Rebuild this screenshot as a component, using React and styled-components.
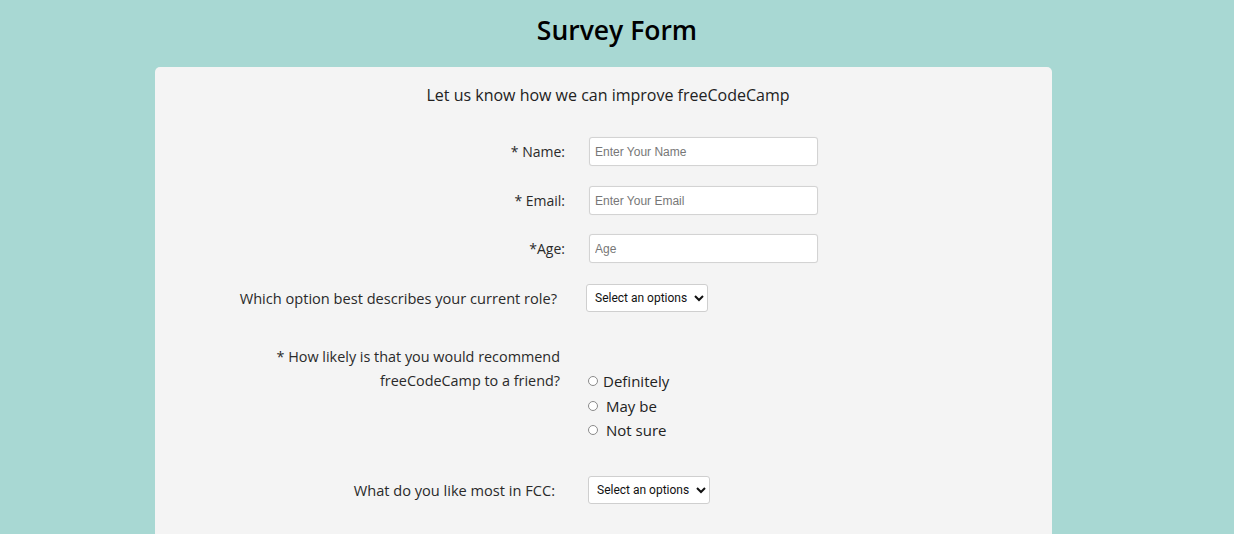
import React from "react";
import styled, { createGlobalStyle } from "styled-components";

const Global = createGlobalStyle`
  html, body { margin: 0; padding: 0; }
  body {
    background: #a8d8d3;
    font-family: "Open Sans", "Noto Sans", sans-serif;
    color: #222;
    overflow: hidden;
  }
`;

const Page = styled.div`
  padding: 0 182px 0 155px;
  height: 534px;
  box-sizing: border-box;
`;

const Title = styled.h1`
  margin: 0;
  height: 67px;
  display: flex;
  align-items: center;
  justify-content: center;
  padding-left: 27px;
  font-size: 26.5px;
  font-weight: 600;
  color: #000;
  padding-bottom: 7px;
  box-sizing: border-box;
`;

const Card = styled.form`
  background: #f4f4f4;
  border-radius: 5px 5px 0 0;
  padding-top: 18px;
  height: 467px;
  box-sizing: border-box;
`;

const Subtitle = styled.p`
  margin: 0 0 31px;
  text-align: center;
  font-size: 16px;
  line-height: 21px;
  padding-left: 9px;
  color: #222;
`;

const Row = styled.div`
  display: grid;
  grid-template-columns: ${(p) => p.$label}px auto;
  column-gap: ${(p) => p.$gap}px;
  align-items: ${(p) => p.$align || "center"};
  margin-top: ${(p) => p.$mt || 0}px;
`;

const Label = styled.label`
  text-align: right;
  font-size: ${(p) => p.$size || 14.6}px;
  line-height: 24px;
  color: #2a2a2a;
`;

const Input = styled.input`
  width: 229px;
  height: 29px;
  box-sizing: border-box;
  border: 1px solid #d3d3d3;
  border-radius: 3px;
  background: #fff;
  padding: 0 5px;
  font-family: "Liberation Sans", Arial, sans-serif;
  font-size: 12px;
  box-shadow: 0 0 1px rgba(0, 0, 0, 0.08);
  &::placeholder { color: #777; }
  outline: none;
`;

const Select = styled.select`
  width: 122px;
  height: 28px;
  box-sizing: border-box;
  border: 1px solid #cfcfcf;
  border-radius: 3px;
  background: #fff;
  padding: 0 3px 0 4px;
  font-family: Roboto, "Liberation Sans", Arial, sans-serif;
  font-size: 12px;
  color: #111;
`;

const RadioGroup = styled.div`
  display: flex;
  flex-direction: column;
  padding-top: 24px;
`;

const RadioOption = styled.label`
  display: flex;
  align-items: center;
  gap: ${(p) => p.$gap || 5}px;
  font-size: 15px;
  line-height: 24.5px;
  color: #222;
`;

const Radio = styled.span`
  width: 10px;
  height: 10px;
  border: 1px solid #8a8a8a;
  border-radius: 50%;
  background: #fff;
  box-sizing: border-box;
  flex-shrink: 0;
`;

export default function App() {
  return (
    <>
      <Global />
      <Page>
        <Title>Survey Form</Title>
        <Card onSubmit={(e) => e.preventDefault()}>
          <Subtitle>Let us know how we can improve freeCodeCamp</Subtitle>
          <Row $label={410} $gap={24}>
            <Label $size={14}>* Name:</Label>
            <Input placeholder="Enter Your Name" />
          </Row>
          <Row $label={410} $gap={24} $mt={20}>
            <Label $size={14}>* Email:</Label>
            <Input placeholder="Enter Your Email" />
          </Row>
          <Row $label={410} $gap={24} $mt={19}>
            <Label $size={14}>*Age:</Label>
            <Input placeholder="Age" />
          </Row>
          <Row $label={402} $gap={29} $mt={21}>
            <Label>Which option best describes your current role?</Label>
            <Select defaultValue="">
              <option value="">Select an options</option>
            </Select>
          </Row>
          <Row $label={405} $gap={28} $mt={33} $align="start">
            <Label $size={14.4}>
              * How likely is that you would recommend
              <br />
              freeCodeCamp to a friend?
            </Label>
            <RadioGroup>
              <RadioOption $gap={5}>
                <Radio />
                Definitely
              </RadioOption>
              <RadioOption $gap={8}>
                <Radio />
                May be
              </RadioOption>
              <RadioOption $gap={8}>
                <Radio />
                Not sure
              </RadioOption>
            </RadioGroup>
          </Row>
          <Row $label={400} $gap={33} $mt={33}>
            <Label>What do you like most in FCC:</Label>
            <Select defaultValue="">
              <option value="">Select an options</option>
            </Select>
          </Row>
        </Card>
      </Page>
    </>
  );
}
